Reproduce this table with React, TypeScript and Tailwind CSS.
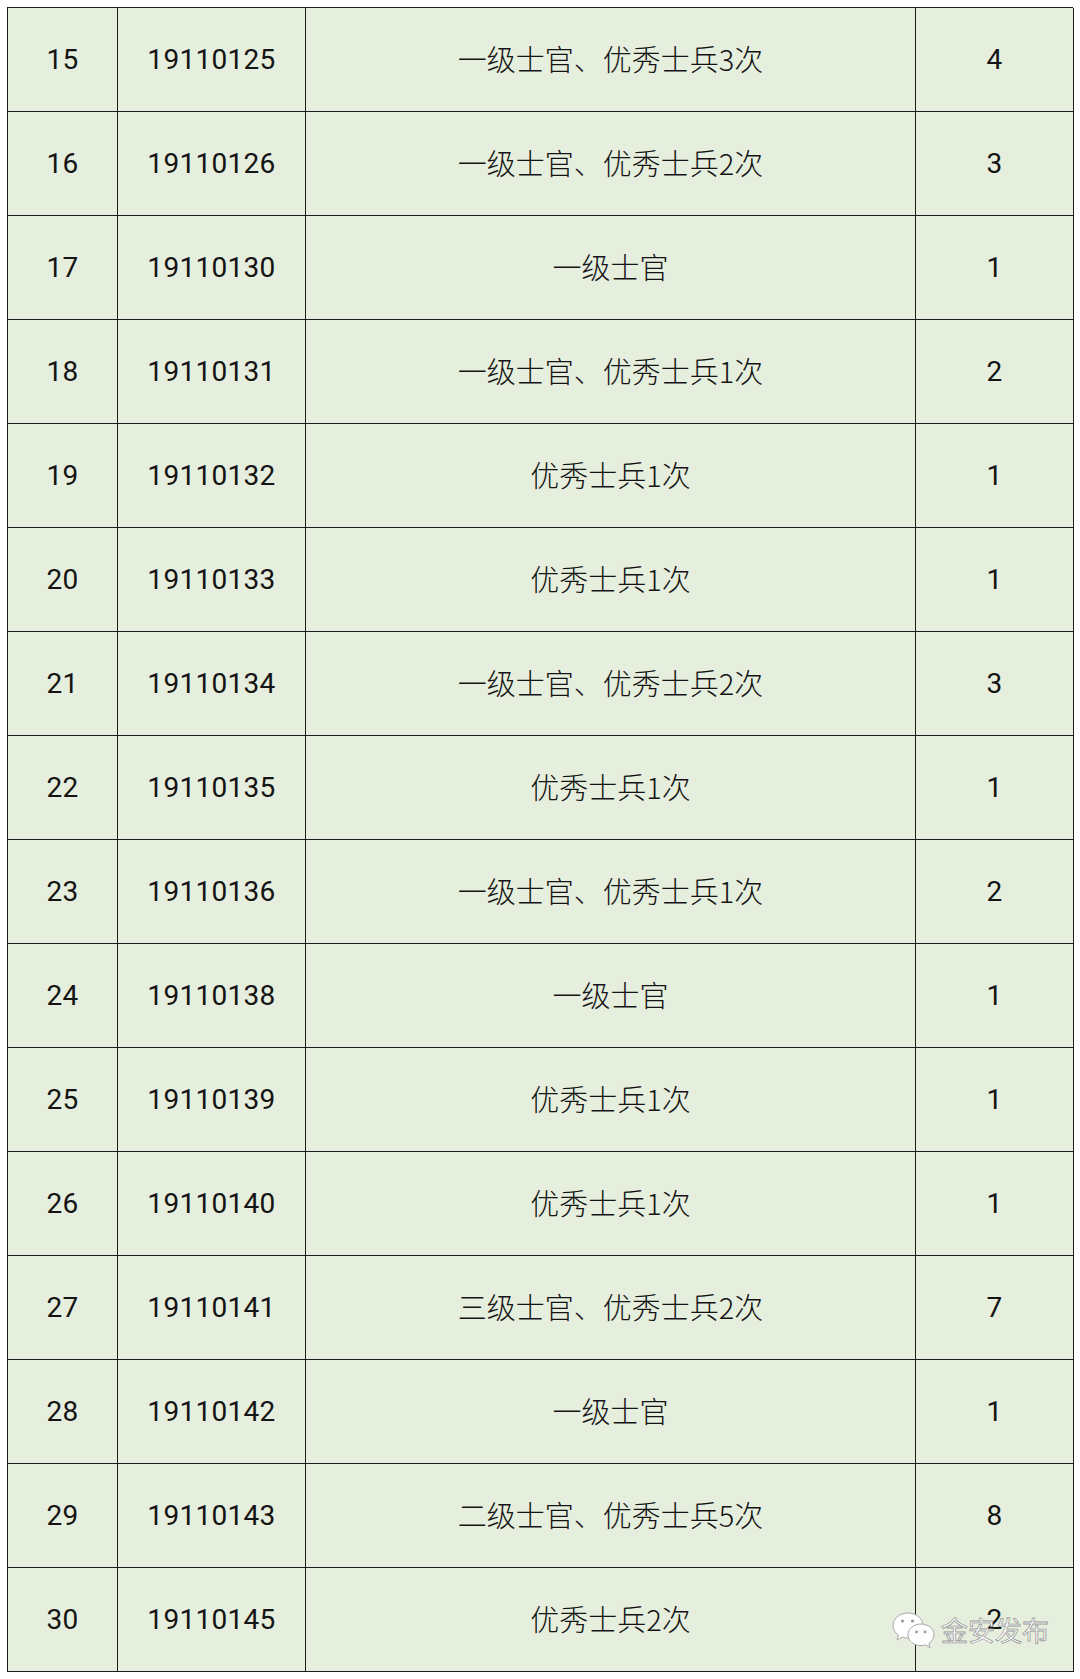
const rows: [string, string, string, string][] = [
  ["15", "19110125", "一级士官、优秀士兵3次", "4"],
  ["16", "19110126", "一级士官、优秀士兵2次", "3"],
  ["17", "19110130", "一级士官", "1"],
  ["18", "19110131", "一级士官、优秀士兵1次", "2"],
  ["19", "19110132", "优秀士兵1次", "1"],
  ["20", "19110133", "优秀士兵1次", "1"],
  ["21", "19110134", "一级士官、优秀士兵2次", "3"],
  ["22", "19110135", "优秀士兵1次", "1"],
  ["23", "19110136", "一级士官、优秀士兵1次", "2"],
  ["24", "19110138", "一级士官", "1"],
  ["25", "19110139", "优秀士兵1次", "1"],
  ["26", "19110140", "优秀士兵1次", "1"],
  ["27", "19110141", "三级士官、优秀士兵2次", "7"],
  ["28", "19110142", "一级士官", "1"],
  ["29", "19110143", "二级士官、优秀士兵5次", "8"],
  ["30", "19110145", "优秀士兵2次", "2"],
];

function WeChatMark() {
  return (
    <svg width="46" height="38" viewBox="0 0 46 38">
      <g fill="#ffffff" stroke="#a8a8a8" strokeWidth="1">
        <path d="M17 2C8.7 2 2 7.6 2 14.5c0 3.9 2.1 7.3 5.4 9.6L6 29l5.4-2.8c1.8.5 3.7.8 5.6.8 8.3 0 15-5.6 15-12.5S25.3 2 17 2z" />
        <path d="M30 13c-7.2 0-13 4.8-13 10.8S22.8 34.6 30 34.6c1.6 0 3.1-.2 4.5-.7L39 36.5l-1.1-4.1c3-2 5.1-5.1 5.1-8.6C43 17.8 37.2 13 30 13z" />
      </g>
      <g fill="#9a9a9a">
        <circle cx="11.5" cy="10" r="1.6" />
        <circle cx="21.5" cy="10" r="1.6" />
        <circle cx="25.5" cy="21" r="1.4" />
        <circle cx="34" cy="21" r="1.4" />
      </g>
    </svg>
  );
}

export default function App() {
  return (
    <div className="relative w-[1080px] h-[1679px] bg-white pt-[7px] pl-[7px]">
      <div className="grid w-[1066px] grid-cols-[110px_188px_610px_158px] auto-rows-[104px] border-t-[1.5px] border-l-[1.5px] border-[#1e1e1e] bg-[#e6eedd] text-[28px] tracking-[0.3px] text-[#141414] font-['Roboto','Noto_Sans_CJK_SC',sans-serif]">
        {rows.map((r) => (
          <div key={r[0]} className="contents">
            <div className="flex items-center justify-center border-r-[1.5px] border-b-[1.5px] border-[#1e1e1e]">{r[0]}</div>
            <div className="flex items-center justify-center border-r-[1.5px] border-b-[1.5px] border-[#1e1e1e]">{r[1]}</div>
            <div className="flex items-center justify-center pb-[2px] border-r-[1.5px] border-b-[1.5px] border-[#1e1e1e] font-['Noto_Sans_CJK_SC',sans-serif] text-[29px] tracking-normal font-light">{r[2]}</div>
            <div className="flex items-center justify-center border-r-[1.5px] border-b-[1.5px] border-[#1e1e1e]">{r[3]}</div>
          </div>
        ))}
      </div>
      <div className="absolute left-[891px] top-[1610px] flex items-center gap-[4px]">
        <WeChatMark />
        <span className="text-[27px] text-white font-['Noto_Sans_CJK_SC',sans-serif] [-webkit-text-stroke:0.8px_#9a9a9a]">金安发布</span>
      </div>
    </div>
  );
}
